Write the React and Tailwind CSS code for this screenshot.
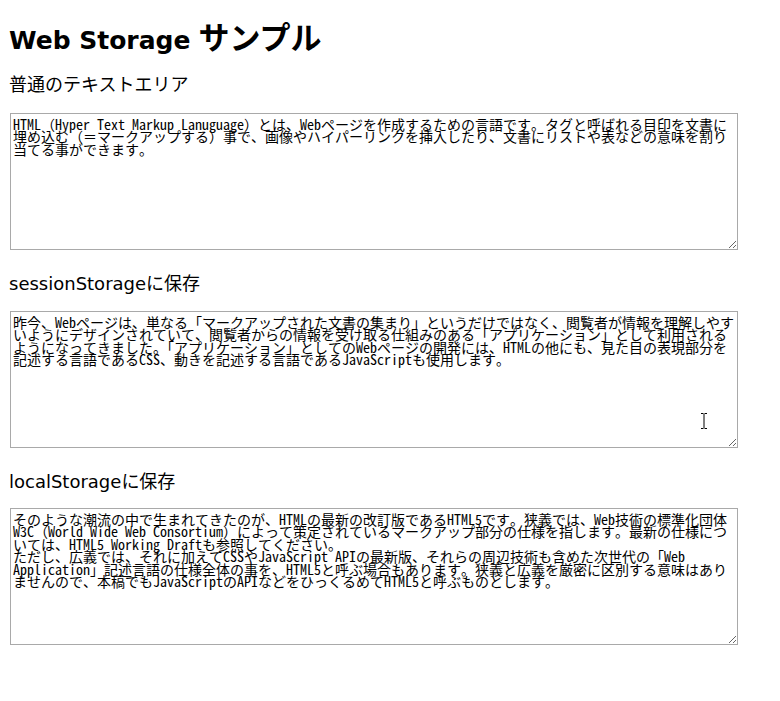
import React from "react";

const text1 =
  "HTML（Hyper Text Markup Lanuguage）とは、Webページを作成するための言語です。タグと呼ばれる目印を文書に埋め込む（＝マークアップする）事で、画像やハイパーリンクを挿入したり、文書にリストや表などの意味を割り当てる事ができます。";

const text2 =
  "昨今、Webページは、単なる「マークアップされた文書の集まり」というだけではなく、閲覧者が情報を理解しやすいようにデザインされていて、閲覧者からの情報を受け取る仕組みのある「アプリケーション」として利用されるようになってきました。「アプリケーション」としてのWebページの開発には、HTMLの他にも、見た目の表現部分を記述する言語であるCSS、動きを記述する言語であるJavaScriptも使用します。";

const text3 =
  "そのような潮流の中で生まれてきたのが、HTMLの最新の改訂版であるHTML5です。狭義では、Web技術の標準化団体W3C（World Wide Web Consortium）によって策定されているマークアップ部分の仕様を指します。最新の仕様については、HTML5 Working Draftも参照してください。\nただし、広義では、それに加えてCSSやJavaScript APIの最新版、それらの周辺技術も含めた次世代の「Web Application」記述言語の仕様全体の事を、HTML5と呼ぶ場合もあります。狭義と広義を厳密に区別する意味はありませんので、本稿でもJavaScriptのAPIなどをひっくるめてHTML5と呼ぶものとします。";

const Area = ({ value, children }) => (
  <div className="relative ml-[1px] w-[728px]">
    <textarea
      defaultValue={value}
      className="block w-[728px] h-[137px] border border-[#a9a9a9] bg-white pl-[2px] pr-[2px] pt-[4px] pb-[2px] text-[14px] leading-[12.4px] text-black font-['Noto_Sans_Mono_CJK_JP','Noto_Sans_CJK_JP',monospace] outline-none"
    />
    {children}
  </div>
);

// latin part in a wider face, like the old Gothic font in the original
const Heading = ({ latin, rest, className }) => (
  <h2
    className={
      "flex items-baseline h-[24px] text-[18px] leading-[24px] font-normal text-black " +
      className
    }
  >
    {latin && (
      <span className="font-['DejaVu_Sans',sans-serif]">{latin}</span>
    )}
    <span className="font-['Noto_Sans_CJK_JP',sans-serif]">{rest}</span>
  </h2>
);

export default function App() {
  return (
    <div className="min-h-[701px] bg-white pl-[9px] pt-[18px] text-black">
      <h1 className="flex items-baseline h-[36px] leading-[36px] font-bold">
        <span className="text-[25px] font-['DejaVu_Sans',sans-serif]">
          Web Storage
        </span>
        <span className="ml-[8px] text-[31px] font-['Noto_Sans_CJK_JP',sans-serif]">
          サンプル
        </span>
      </h1>
      <Heading className="mt-[17px] mb-[18px]" rest="普通のテキストエリア" />
      <Area value={text1} />
      <Heading
        className="mt-[20px] mb-[17px]"
        latin="sessionStorage"
        rest="に保存"
      />
      <Area value={text2}>
        {/* mouse cursor left in the screenshot */}
        <svg
          className="absolute left-[690px] top-[101px]"
          width="8"
          height="18"
          viewBox="0 0 8 18"
        >
          <path
            d="M1 1.5h2.5M4.5 1.5H7M4 2v14M1 16.5h2.5M4.5 16.5H7"
            stroke="#000"
            strokeWidth="1"
            fill="none"
          />
        </svg>
      </Area>
      <Heading
        className="mt-[20px] mb-[16px]"
        latin="localStorage"
        rest="に保存"
      />
      <Area value={text3} />
    </div>
  );
}
